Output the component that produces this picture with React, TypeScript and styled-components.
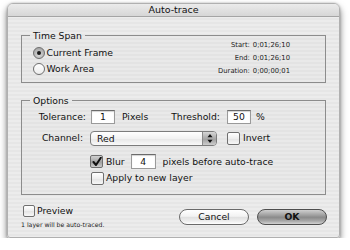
import React from "react";
import styled, { createGlobalStyle, css } from "styled-components";

const GlobalStyle = createGlobalStyle`
  html, body { margin: 0; padding: 0; background: #ffffff; }
  body {
    font-family: "DejaVu Sans", Verdana, sans-serif;
    color: #111;
    -webkit-font-smoothing: antialiased;
  }
`;

const Page = styled.div`
  padding: 3px 0 0 7px;
`;

const Window = styled.div`
  box-sizing: border-box;
  width: 333px;
  height: 235px;
  border: 1px solid #b0b0b0;
  border-radius: 6px 6px 3px 3px;
  background: repeating-linear-gradient(
    to bottom,
    #ececec 0px,
    #ececec 2px,
    #e6e6e6 2px,
    #e6e6e6 4px
  );
  box-shadow: 0 4px 7px rgba(0, 0, 0, 0.55), 0 0 2px rgba(0, 0, 0, 0.25);
  display: flex;
  flex-direction: column;
`;

const TitleBar = styled.div`
  height: 12px;
  border-bottom: 1px solid #a4a4a4;
  border-radius: 5px 5px 0 0;
  background: linear-gradient(to bottom, #ebebeb, #d6d6d6);
  font-size: 9.5px;
  line-height: 12px;
  text-align: center;
  color: #111;
`;

const Body = styled.div`
  padding: 12.5px 13px 0 13px;
`;

const Group = styled.fieldset<{ $mt?: number; $pb: number }>`
  margin: ${(p) => p.$mt ?? 0}px 0 0 0;
  border: 1px solid #8c8c8c;
  padding: 0 12px ${(p) => p.$pb}px 8px;
  background: rgba(0, 0, 0, 0.012);
  min-width: 0;
`;

const Legend = styled.legend`
  font-size: 9.25px;
  line-height: 11px;
  padding: 0 3px;
  color: #111;
`;

const SpanContent = styled.div`
  display: flex;
  justify-content: space-between;
  align-items: flex-start;
  padding-left: 3px;
`;

const RadioColumn = styled.div`
  display: flex;
  flex-direction: column;
  gap: 2px;
  margin-top: 5px;
`;

const OptionRow = styled.label`
  display: flex;
  align-items: center;
  height: 14px;
  font-size: 9.25px;
  line-height: 14px;
`;

const RadioCircle = styled.span<{ $on?: boolean }>`
  box-sizing: border-box;
  width: 12px;
  height: 12px;
  border-radius: 50%;
  border: 1px solid #6e6e6e;
  margin-right: 1.5px;
  display: flex;
  align-items: center;
  justify-content: center;
  background: ${(p) =>
    p.$on
      ? "radial-gradient(circle at 50% 70%, #d8d8d8, #9a9a9a)"
      : "linear-gradient(to bottom, #ffffff, #ececec)"};
  &::after {
    content: "";
    display: ${(p) => (p.$on ? "block" : "none")};
    width: 4px;
    height: 4px;
    border-radius: 50%;
    background: #1a1a1a;
  }
`;

const InfoGrid = styled.div`
  display: grid;
  grid-template-columns: auto auto;
  column-gap: 3px;
  margin-top: -1.5px;
  margin-right: 23px;
  font-size: 6.8px;
  line-height: 13px;
  color: #222;
`;

const InfoLabel = styled.span`
  text-align: right;
`;

const InfoValue = styled.span`
  text-align: left;
`;

const Row = styled.div<{ $mt: number; $pl?: number; $h?: number }>`
  display: flex;
  align-items: center;
  margin-top: ${(p) => p.$mt}px;
  padding-left: ${(p) => 3 + (p.$pl ?? 0)}px;
  height: ${(p) => p.$h ?? 14}px;
  font-size: 9.25px;
  line-height: 14px;
`;

const FieldLabel = styled.span<{ $w: number }>`
  width: ${(p) => p.$w}px;
  text-align: right;
  flex: none;
`;

const Text = styled.span<{ $ml?: number }>`
  margin-left: ${(p) => p.$ml ?? 0}px;
  white-space: nowrap;
`;

const NumberField = styled.span<{ $w: number; $h?: number; $ml: number }>`
  box-sizing: border-box;
  width: ${(p) => p.$w}px;
  height: ${(p) => p.$h ?? 14}px;
  margin-left: ${(p) => p.$ml}px;
  background: #fff;
  border: 1px solid #9a9a9a;
  border-top-color: #6a6a6a;
  box-shadow: inset 0 1px 1px rgba(0, 0, 0, 0.18);
  text-align: center;
  font-size: 9.25px;
  line-height: ${(p) => (p.$h ?? 14) - 2}px;
`;

const Popup = styled.div`
  box-sizing: border-box;
  width: 127px;
  height: 15px;
  margin-left: 7px;
  border: 1px solid #7c7c7c;
  border-radius: 4px;
  background: linear-gradient(to bottom, #ffffff, #f2f2f2 50%, #e6e6e6 51%, #fafafa);
  display: flex;
  align-items: stretch;
  overflow: hidden;
`;

const PopupText = styled.span`
  flex: 1;
  padding-left: 6px;
  line-height: 13px;
`;

const PopupArrows = styled.span`
  width: 13px;
  border-left: 1px solid #8a8a8a;
  background: linear-gradient(to bottom, #d6d6d6, #a9a9a9 50%, #9c9c9c 51%, #cdcdcd);
  display: flex;
  align-items: center;
  justify-content: center;
`;

const Box = styled.span<{ $on?: boolean; $ml?: number; $size?: number }>`
  box-sizing: border-box;
  width: ${(p) => p.$size ?? 13}px;
  height: ${(p) => p.$size ?? 13}px;
  margin-left: ${(p) => p.$ml ?? 0}px;
  border: 1px solid #6f6f6f;
  border-radius: 2px;
  flex: none;
  display: flex;
  align-items: center;
  justify-content: center;
  ${(p) =>
    p.$on
      ? css`
          background: linear-gradient(to bottom, #d0d0d0, #a6a6a6 50%, #9a9a9a 51%, #cccccc);
        `
      : css`
          background: linear-gradient(to bottom, #ffffff, #eeeeee 50%, #e3e3e3 51%, #f7f7f7);
        `}
`;

const Footer = styled.div`
  display: flex;
  justify-content: space-between;
  align-items: flex-start;
  padding: 9px 12px 0 13px;
`;

const FooterLeft = styled.div`
  display: flex;
  flex-direction: column;
`;

const PreviewRow = styled.label`
  display: flex;
  align-items: center;
  height: 14px;
  font-size: 9.25px;
  line-height: 14px;
`;

const Note = styled.div`
  margin-top: 3px;
  font-size: 6.2px;
  line-height: 8px;
  color: #222;
`;

const Buttons = styled.div`
  display: flex;
  gap: 8px;
  margin-top: 5px;
`;

const Button = styled.button<{ $default?: boolean }>`
  box-sizing: border-box;
  width: 70px;
  height: 16px;
  padding: 0;
  border-radius: 8px;
  font-family: "DejaVu Sans", Verdana, sans-serif;
  font-size: 9.25px;
  line-height: 14px;
  color: #111;
  ${(p) =>
    p.$default
      ? css`
          border: 1px solid #4e4e4e;
          background: linear-gradient(
            to bottom,
            #cfcfcf 0%,
            #9c9c9c 40%,
            #8a8a8a 52%,
            #a7a7a7 78%,
            #d2d2d2 100%
          );
          font-weight: bold;
        `
      : css`
          border: 1px solid #6a6a6a;
          background: linear-gradient(
            to bottom,
            #ffffff 0%,
            #f2f2f2 45%,
            #e0e0e0 52%,
            #eeeeee 80%,
            #ffffff 100%
          );
        `}
`;

const Check = () => (
  <svg width="10" height="10" viewBox="0 0 10 10">
    <path d="M1.5 5 L4 8 L8.8 0.8" fill="none" stroke="#111" strokeWidth="2" strokeLinecap="round" strokeLinejoin="round" />
  </svg>
);

const Arrows = () => (
  <svg width="6" height="11" viewBox="0 0 6 11">
    <path d="M0.5 4.3 L3 1 L5.5 4.3 Z" fill="#111" />
    <path d="M0.5 6.7 L3 10 L5.5 6.7 Z" fill="#111" />
  </svg>
);

export default function App() {
  return (
    <>
      <GlobalStyle />
      <Page>
        <Window>
          <TitleBar>Auto-trace</TitleBar>
          <Body>
            <Group $pb={4}>
              <Legend>Time Span</Legend>
              <SpanContent>
                <RadioColumn>
                  <OptionRow>
                    <RadioCircle $on />
                    Current Frame
                  </OptionRow>
                  <OptionRow>
                    <RadioCircle />
                    Work Area
                  </OptionRow>
                </RadioColumn>
                <InfoGrid>
                  <InfoLabel>Start:</InfoLabel>
                  <InfoValue>0;01;26;10</InfoValue>
                  <InfoLabel>End:</InfoLabel>
                  <InfoValue>0;01;26;10</InfoValue>
                  <InfoLabel>Duration:</InfoLabel>
                  <InfoValue>0;00;00;01</InfoValue>
                </InfoGrid>
              </SpanContent>
            </Group>

            <Group $mt={11.5} $pb={9}>
              <Legend>Options</Legend>
              <Row $mt={4.5}>
                <FieldLabel $w={53}>Tolerance:</FieldLabel>
                <NumberField $w={24} $ml={5}>1</NumberField>
                <Text $ml={7}>Pixels</Text>
                <Text $ml={23}>Threshold:</Text>
                <NumberField $w={24} $ml={7}>50</NumberField>
                <Text $ml={5}>%</Text>
              </Row>
              <Row $mt={6.5} $h={15}>
                <FieldLabel $w={50}>Channel:</FieldLabel>
                <Popup>
                  <PopupText>Red</PopupText>
                  <PopupArrows>
                    <Arrows />
                  </PopupArrows>
                </Popup>
                <Box $ml={10} />
                <Text $ml={3}>Invert</Text>
              </Row>
              <Row $mt={8.5} $pl={57} $h={15}>
                <Box $on>
                  <Check />
                </Box>
                <Text $ml={3}>Blur</Text>
                <NumberField $w={25} $h={15} $ml={6}>4</NumberField>
                <Text $ml={7}>pixels before auto-trace</Text>
              </Row>
              <Row $mt={2} $pl={58}>
                <Box />
                <Text $ml={2}>Apply to new layer</Text>
              </Row>
            </Group>
          </Body>
          <Footer>
            <FooterLeft>
              <PreviewRow>
                <Box $ml={2} $size={12} />
                <Text $ml={2}>Preview</Text>
              </PreviewRow>
              <Note>1 layer will be auto-traced.</Note>
            </FooterLeft>
            <Buttons>
              <Button>Cancel</Button>
              <Button $default>OK</Button>
            </Buttons>
          </Footer>
        </Window>
      </Page>
    </>
  );
}
